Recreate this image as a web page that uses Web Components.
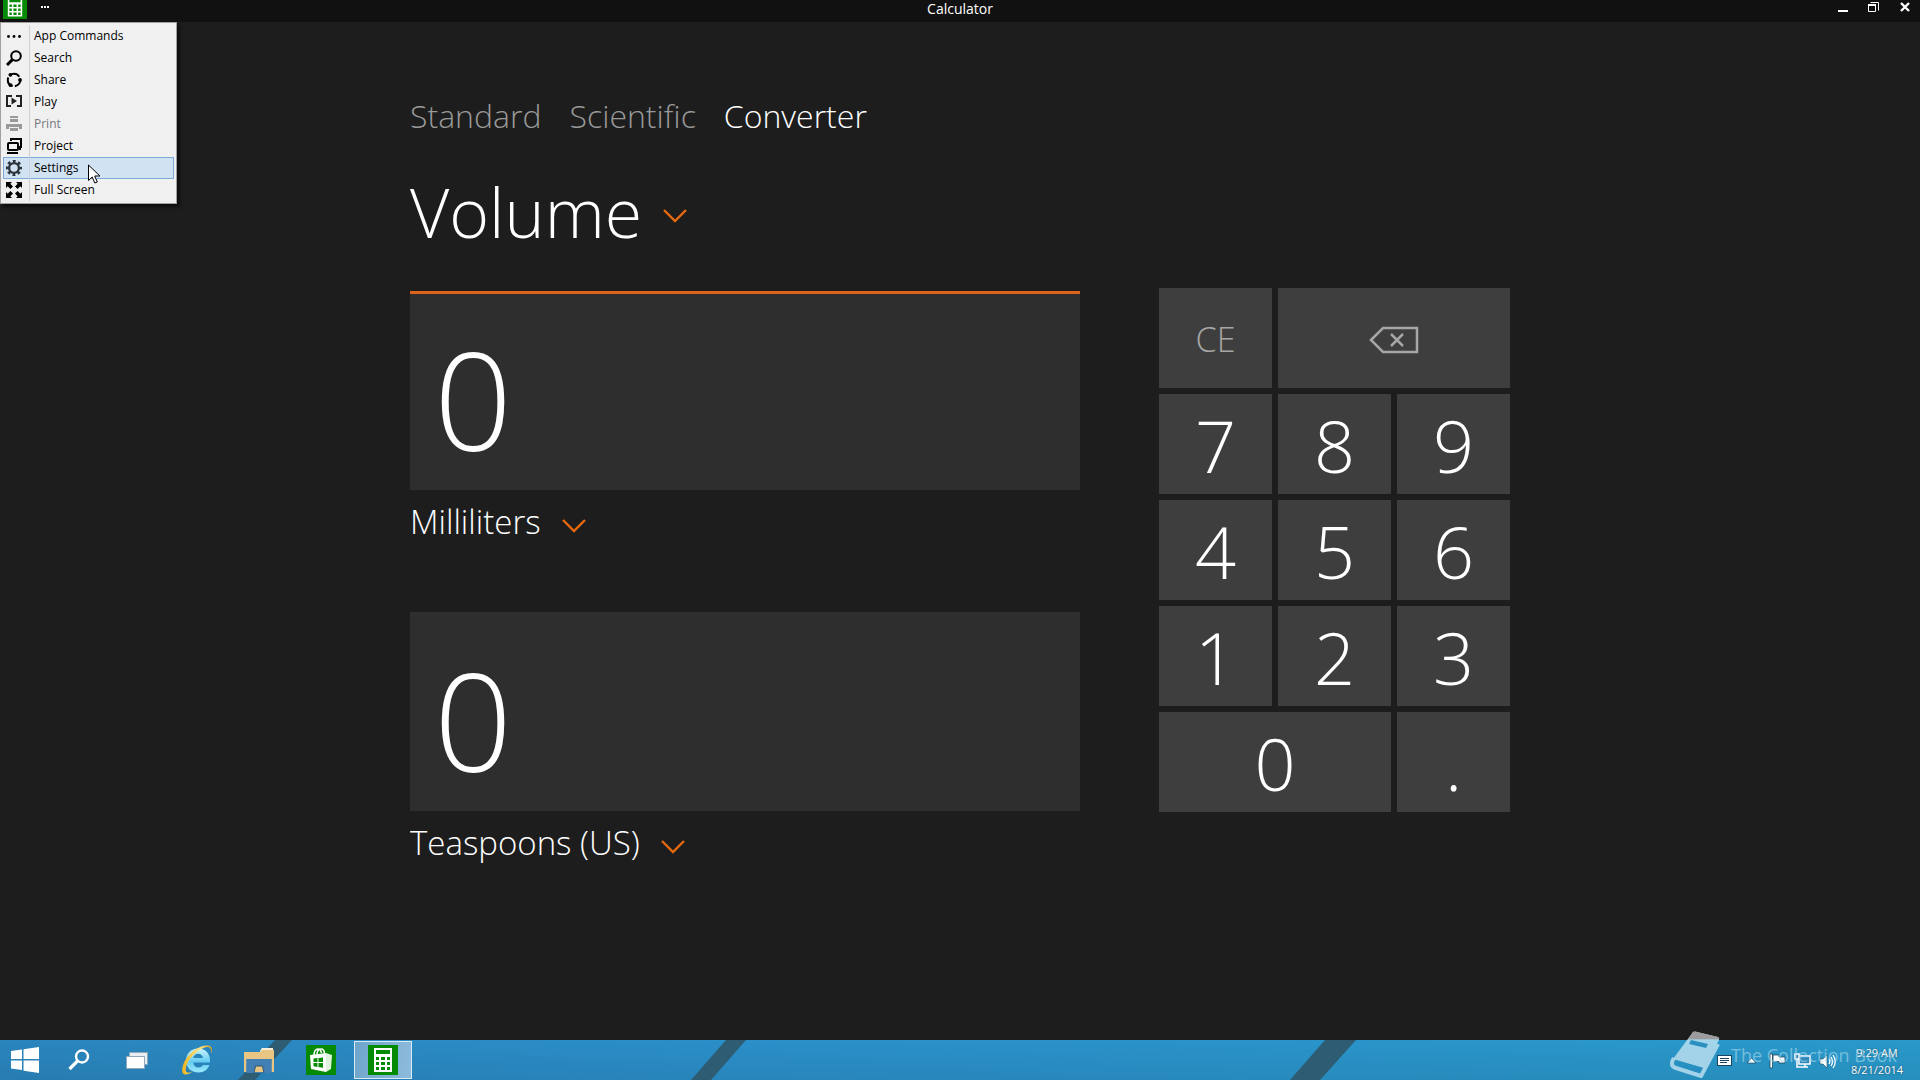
<!DOCTYPE html>
<html lang="en">
<head>
<meta charset="utf-8">
<meta name="viewport" content="width=device-width, initial-scale=1">
<title>Calculator</title>
<style>
  body {
    margin: 0;
    background: #1d1d1d;
    color: #fff;
    font-family: "Open Sans", "Noto Sans", sans-serif;
  }
</style>
</head>
<body>
<calculator-app></calculator-app>

<script>
const calcIcon = `
  <svg viewBox="0 0 30 30" aria-hidden="true">
    <rect width="30" height="30" fill="#058a05"/>
    <path fill="#fff" fill-rule="evenodd" d="M6 3h18v24H6zM8 5v4h14V5zM8 12v3h3v-3zM13 12v3h4v-3zM19 12v3h3v-3zM8 17v3h3v-3zM13 17v3h4v-3zM19 17v3h3v-3zM8 22v3h3v-3zM13 22v3h4v-3zM19 22v3h3v-3z"/>
  </svg>`;

const menuIcons = {
  commands: '<circle cx="2.5" cy="8.5" r="1.4"/><circle cx="8" cy="8.5" r="1.4"/><circle cx="13.5" cy="8.5" r="1.4"/>',
  search: '<g fill="none" stroke="#000"><circle cx="10" cy="6" r="4.8" stroke-width="2"/><path d="M6.4 9.6 1 15" stroke-width="3"/></g>',
  share: '<circle cx="8" cy="8" r="6.2" fill="none" stroke="#000" stroke-width="2" stroke-dasharray="10.6 2.38" stroke-dashoffset="2"/><circle cx="4.4" cy="2.8" r="1.9"/><circle cx="14" cy="8" r="1.9"/><circle cx="4.6" cy="13.2" r="1.9"/>',
  play: '<path fill="none" stroke="#222" stroke-width="2" d="M6 2H1v10h4M10 2h5v10h-4"/><path fill="#222" d="M5.5 3.500 11 7l-5.500 3.500z"/>',
  print: '<path fill="#999" d="M4 0h8v2H4zM4 3h8v3H4zM0 8h16v5h-3v-2H3v2H0zM4 12h8v3H4z"/>',
  project: '<g fill="none" stroke="#000" stroke-width="2"><path d="M5 3V1h10v8h-2"/><rect x="2" y="5" width="10" height="7" rx="1"/><path d="M1 15h11M14 12v-2"/></g>',
  settings: '<g fill="none" stroke="#2b343c"><circle cx="8" cy="8" r="4.9" stroke-width="2.4"/><circle cx="8" cy="8" r="6.8" stroke-width="2.6" stroke-dasharray="2.8 2.54" stroke-dashoffset="1.4"/></g>',
  full: '<path d="M0 0h6L4.300 1.700 7 4.400 4.400 7 1.700 4.300 0 6zM16 0h-6l1.700 1.700L9 4.400 11.600 7l2.700-2.700L16 6zM0 16h6l-1.700-1.700L7 11.600 4.400 9l-2.700 2.700L0 10zM16 16h-6l1.700-1.700L9 11.600 11.600 9l2.700 2.700L16 10z"/>'
};

const taskIcons = {
  start: '<svg width="28" height="26" viewBox="0 0 28 26"><path fill="#fff" d="M0 4l11-1.600V12H0zM12.500 2.200 28 0v12H12.500zM0 13.500h11V23L0 21.500zM12.500 13.500H28V26l-15.500-2.300z"/></svg>',
  search: '<svg width="22" height="22" viewBox="0 0 22 22"><g fill="none" stroke="#fff"><circle cx="14" cy="7.500" r="6" stroke-width="2.400"/><path d="M9.500 12 1.500 20" stroke-width="3.200"/></g></svg>',
  views: '<svg width="22" height="17" viewBox="0 0 22 17"><path fill="#e9eef2" stroke="#8fa9ba" d="M3.500.5h18v12h-18z"/><path fill="#fff" stroke="#8fa9ba" d="M.5 4.500h18v12H.5z"/></svg>',
  ie: `<svg width="32" height="32" viewBox="0 0 32 32">
    <defs><linearGradient id="b" x2="0" y2="1"><stop offset="0" stop-color="#c9f3fd"/><stop offset=".55" stop-color="#64cdf2"/><stop offset="1" stop-color="#9be8fb"/></linearGradient>
    <linearGradient id="y" x2="1" y2="0"><stop offset="0" stop-color="#f0b41c"/><stop offset=".6" stop-color="#fbe38a"/><stop offset="1" stop-color="#e2a50c"/></linearGradient></defs>
    <path fill="url(#b)" fill-rule="evenodd" d="M17 4.500c-7 0-12 5-12 12s5 12 12.500 12c5.500 0 9.500-3 11-7.500h-6.500c-.8 1.500-2.300 2.500-4.500 2.500-3 0-5-2-5.200-5h16.700C29.500 10 25 4.500 17 4.500zm-4.700 9.500c.4-2.500 2.200-4.300 4.800-4.300s4.500 1.800 4.800 4.300z"/>
    <path fill="url(#y)" d="M30.500 8.500c.8-3.500.2-5.800-2-6.500C22-.2 9.500 6.500 3.800 17 .3 23.500.2 30 4 30.500c2.300.3 5-1 7.500-3-3.300 1.600-6.300 1.700-6.700-1C4 21 9.500 12.500 16.500 7.300c5.500-4 11-5.500 12.700-3.300.8 1 1 2.500.6 4.500z"/>
  </svg>`,
  files: '<svg width="30" height="26" viewBox="0 0 30 26"><path fill="#f8efd8" d="M16 4l2-3h11v5H16z"/><path fill="#e9c583" d="M0 5h16l2-2h12v22h-2.500V12h-25v13H0z"/><path fill="#417fb5" d="M2.500 12h25v14h-25z"/><path fill="#e9c583" d="M10 25l1.500-6h7l1.500 6z"/><path fill="none" stroke="#31546d" d="M10 26l1.500-7h7l1.500 7"/></svg>',
  store: '<svg width="30" height="30" viewBox="0 0 30 30"><path fill="#058a05" d="M0 0h30v30H0z"/><path fill="none" stroke="#fff" stroke-width="1.500" d="M8 11c0-5 2-7 4-7s3 1.500 3.500 4M11 10c0-4 2-6 4-6s3.500 2 3.500 5"/><path fill="#fff" d="M4 10l16-2v19L5 24z"/><path fill="#dff3df" d="M20 8l6 2-1 14-5 3z"/><path fill="#058a05" d="M7.500 13.500l4-.5v4h-4zM12.500 13l4.500-.6V17h-4.500zM7.500 18h4v4l-4-.7zM12.500 18H17v4.800l-4.500-.7z"/></svg>',
  calc: calcIcon.replace('<svg', '<svg width="30" height="30"')
};

const trayIcons = {
  'Touch keyboard': '<rect x="2.500" y="3.500" width="14" height="10" fill="#fff" stroke="#1b455e"/><path stroke="#1b455e" d="M5 6.500h9M5 8.500h9M5 10.500h7"/>',
  'Show hidden icons': '<path fill="#fff" stroke="#1b455e" stroke-width=".7" d="M6 11l4.500-5 4.500 5z"/>',
  'Action center': '<path fill="#fff" stroke="#1b455e" stroke-width=".8" d="M3 2h2.500v14H3zM6 3h6v2h6v6h-6V9.500H6z"/>',
  'Network': '<path fill="#2d88b8" stroke="#fff" stroke-width="1.500" d="M6 4h11v8H6zM9 15h6M12 12v3M2 2h4v5H2zM4 7v8h5"/>',
  'Volume': '<path fill="#fff" stroke="#1b455e" stroke-width=".6" d="M1 7h3l4-4v13l-4-4H1z"/><path fill="none" stroke="#fff" stroke-width="1.300" d="M10 7q1.500 2.500 0 5M12 5q3 4.500 0 9M14 3q4.500 6.500 0 13"/>'
};

class BaseElement extends HTMLElement {
  constructor() {
    super();
    this.attachShadow({ mode: 'open' });
  }

  connectedCallback() {
    this.shadowRoot.innerHTML = `
      <style>
        * { box-sizing: border-box; }
        button, select { margin: 0; padding: 0; border: 0; background: none; color: inherit; font: inherit; }
        svg { display: block; flex: none; }
      </style>
      ${this.render()}`;
  }
}

class TitleBar extends BaseElement {
  render() {
    return `
      <style>
        :host {
          display: grid;
          grid-template-columns: 1fr auto 1fr;
          height: 22px;
          overflow: hidden;
          background: #111;
          font-size: 14px;
          line-height: 17px;
        }
        div { display: flex; align-items: start; }
        h1 { margin: 0; font: inherit; }
        .app { padding-left: 3px; gap: 12px; }
        .app button:first-child svg { width: 24px; height: 24px; margin-top: -5px; }
        .window { justify-content: end; gap: 15px; padding-right: 7px; }
      </style>
      <div class="app">
        <button aria-label="System menu">${calcIcon}</button>
        <button aria-label="App commands"><svg width="14" height="14"><path fill="#fff" d="M2 6h2v2H2zM5 6h2v2H5zM8 6h2v2H8z"/></svg></button>
      </div>
      <h1>Calculator</h1>
      <div class="window">
        <button aria-label="Minimize"><svg width="16" height="14"><path fill="#fff" d="M3 10h10v2H3z"/></svg></button>
        <button aria-label="Restore"><svg width="16" height="14"><path fill="none" stroke="#fff" d="M4.500 2.500h8v8M2.500 5.500h7v6h-7z"/><path fill="#fff" d="M2 4h8v2H2z"/></svg></button>
        <button aria-label="Close"><svg width="16" height="14"><path stroke="#fff" stroke-width="2.400" d="M4 3l8 8M12 3l-8 8"/></svg></button>
      </div>`;
  }
}

class MenuItem extends BaseElement {
  render() {
    const icon = menuIcons[this.getAttribute('icon')];
    return `
      <style>
        :host { display: block; }
        button {
          display: flex;
          align-items: center;
          width: 100%;
          height: 22px;
          border: 1px solid transparent;
          color: #000;
          text-align: left;
        }
        svg { margin: 0 7px 0 2px; }
        span { flex: 1; border-left: 1px solid #ccd0d4; padding-left: 4px; line-height: 22px; }
        button:disabled { color: #77777c; }
        :host([active]) button { background: #d1e2f2; border-color: #7fa9d8; }
      </style>
      <button role="menuitem" ${this.hasAttribute('disabled') ? 'disabled' : ''}>
        <svg width="16" height="16" viewBox="0 0 16 16" aria-hidden="true">${icon}</svg>
        <span><slot></slot></span>
      </button>`;
  }
}

class CommandMenu extends BaseElement {
  render() {
    return `
      <style>
        :host {
          display: block;
          width: 177px;
          box-sizing: border-box;
          padding: 2px;
          border: 1px solid #a0a0a0;
          background: #f0f0f0;
          box-shadow: 3px 3px 3px #0008;
          font-size: 12px;
        }
        .cursor { position: absolute; left: 87px; top: 141px; }
      </style>
      <div role="menu">
        <menu-item icon="commands">App Commands</menu-item>
        <menu-item icon="search">Search</menu-item>
        <menu-item icon="share">Share</menu-item>
        <menu-item icon="play">Play</menu-item>
        <menu-item icon="print" disabled>Print</menu-item>
        <menu-item icon="project">Project</menu-item>
        <menu-item icon="settings" active>Settings</menu-item>
        <menu-item icon="full">Full Screen</menu-item>
      </div>
      <svg class="cursor" width="13" height="20" viewBox="0 0 13 20"><path fill="#fff" stroke="#000" d="M.5 1v15.500l3.700-3.500 2.600 6 2.500-1-2.600-6h5.200z"/></svg>`;
  }
}

class ModeTabs extends BaseElement {
  render() {
    return `
      <style>
        :host { display: block; font-size: 32px; line-height: 48px; font-weight: 300; }
        nav { display: flex; gap: 28px; }
        a { color: #999; text-decoration: none; }
        a[aria-current] { color: #fff; }
      </style>
      <nav aria-label="Mode">
        <a href="#standard">Standard</a>
        <a href="#scientific">Scientific</a>
        <a href="#converter" aria-current="page">Converter</a>
      </nav>`;
  }
}

class UnitPicker extends BaseElement {
  render() {
    return `
      <style>
        :host { display: block; font-size: 33px; line-height: 48px; font-weight: 300; }
        :host([large]) { font-size: 68px; line-height: 96px; }
        label { display: inline-flex; align-items: center; gap: 20px; }
        select { appearance: none; field-sizing: content; outline: none; }
        option { background: #2e2e2e; font-size: 20px; }
      </style>
      <label>
        <select aria-label="${this.getAttribute('label')}">
          <option>${this.getAttribute('value')}</option>
        </select>
        <svg width="26" height="24" viewBox="0 0 26 24" aria-hidden="true"><path fill="none" stroke="#e8690f" stroke-width="2.400" d="M2 10l11 11 11-11"/></svg>
      </label>`;
  }
}

class ValueDisplay extends BaseElement {
  render() {
    return `
      <style>
        :host { display: block; }
        output {
          display: block;
          height: 199px;
          padding: 24px 24px 0;
          border-top: 3px solid #2e2e2e;
          background: #2e2e2e;
          font-size: 137px;
          line-height: 160px;
          font-weight: 300;
        }
        :host([active]) output { border-color: #d9641a; }
      </style>
      <output><slot></slot></output>`;
  }
}

class KeyPad extends BaseElement {
  render() {
    const digits = (list) => list.map((key) => `<button>${key}</button>`).join('');
    return `
      <style>
        :host {
          display: grid;
          grid-template-columns: repeat(3, 1fr);
          grid-auto-rows: 100px;
          gap: 6px;
          align-content: start;
          font-size: 72px;
          font-weight: 300;
        }
        button {
          display: flex;
          align-items: center;
          justify-content: center;
          padding-top: 3px;
          background: #3e3e3e;
          line-height: 97px;
        }
        .wide { grid-column: span 2; }
        .dim { color: #a6a6a6; font-size: 34px; }
      </style>
      <button class="dim">CE</button>
      <button class="dim wide" aria-label="Backspace">
        <svg width="50" height="28" viewBox="0 0 50 28" fill="none" stroke="#a6a6a6" stroke-width="2.500"><path d="M2 14 14 2h34v24H14zM22 8l12 12M34 8 22 20"/></svg>
      </button>
      ${digits([7, 8, 9, 4, 5, 6, 1, 2, 3])}
      <button class="wide">0</button>
      <button>.</button>`;
  }
}

class TaskButton extends BaseElement {
  render() {
    return `
      <style>
        :host { display: block; width: 62px; padding: 1px 2px; box-sizing: border-box; }
        :host([size="small"]) { width: 58px; }
        :host([size="start"]) { width: 50px; }
        button { display: flex; align-items: center; justify-content: center; width: 100%; height: 38px; }
        :host([active]) button { border: 1px solid #d8ecf8; background: linear-gradient(100deg, #6fa5cb, #8dbbdc); }
      </style>
      <button aria-label="${this.getAttribute('label')}">${taskIcons[this.getAttribute('icon')]}</button>`;
  }
}

class SystemTray extends BaseElement {
  render() {
    const icons = Object.entries(trayIcons)
      .map(([name, shape]) => `<button aria-label="${name}"><svg width="19" height="18" viewBox="0 0 19 18">${shape}</svg></button>`)
      .join('');
    return `
      <style>
        :host { display: flex; align-items: center; padding-right: 7px; font-size: 11px; line-height: 17px; }
        button { display: flex; justify-content: center; width: 26px; padding-top: 2px; }
        .clock { display: block; width: 72px; text-align: center; text-shadow: 0 0 2px #1b455e; }
        time { display: block; }
      </style>
      ${icons}
      <button class="clock"><time>9:29 AM</time><time>8/21/2014</time></button>`;
  }
}

class TaskBar extends BaseElement {
  render() {
    return `
      <style>
        :host {
          display: flex;
          justify-content: space-between;
          position: relative;
          height: 40px;
          background: linear-gradient(#0000, #0001), linear-gradient(90deg, #2a85bd, #2b8fc9 40%, #2999ca);
        }
        .stripes { position: absolute; inset: 0; width: 100%; height: 100%; }
        nav, system-tray { position: relative; }
        nav { display: flex; }
      </style>
      <svg class="stripes" viewBox="0 0 1920 40" preserveAspectRatio="none" aria-hidden="true">
        <path fill="#2d5c73" d="M275 0h17l-37 40h-17zM726 0h20l-35 40h-20zM1325 0h31l-36 40h-30z"/>
      </svg>
      <nav aria-label="Taskbar">
        <task-button icon="start" label="Start" size="start"></task-button>
        <task-button icon="search" label="Search" size="small"></task-button>
        <task-button icon="views" label="Task View" size="small"></task-button>
        <task-button icon="ie" label="Internet Explorer"></task-button>
        <task-button icon="files" label="File Explorer"></task-button>
        <task-button icon="store" label="Store"></task-button>
        <task-button icon="calc" label="Calculator" active></task-button>
      </nav>
      <system-tray></system-tray>`;
  }
}

class BookMark extends BaseElement {
  render() {
    return `
      <style>
        :host { display: flex; align-items: center; gap: 11px; font-size: 18px; line-height: 24px; pointer-events: none; }
        svg { opacity: .85; }
        span { color: #a5d8ee; opacity: .6; }
      </style>
      <svg width="50" height="47" viewBox="0 0 50 47" aria-hidden="true">
        <path fill="#b8dff0" d="M23 1q2-1 4 0l21 5q2 1 1 3L34 37 3 28z"/>
        <path fill="#b3b3b3" d="M23 1q2-1 4 0l21 5q1 1 1 2H18.500z"/>
        <path fill="none" stroke="#b8dff0" stroke-width="4" d="M4 27q-5 8 2 10l25 8 17-32"/>
        <path fill="#2c8fbe" d="M21 9l17 4-2 4-17-4z"/>
      </svg>
      <span>The Collection Book</span>`;
  }
}

class CalculatorApp extends BaseElement {
  render() {
    return `
      <style>
        :host { display: flex; flex-direction: column; position: relative; min-height: 100vh; }
        command-menu { position: absolute; left: 0; top: 22px; }
        book-mark { position: absolute; right: 23px; bottom: 2px; }
        main { flex: 1; width: 100%; max-width: 1100px; margin: 0 auto; padding-top: 70px; }
        main > unit-picker { margin: 24px 0 28px; }
        .converter { display: grid; grid-template-columns: minmax(0, 1fr) 351px; gap: 79px; }
        .values { padding-top: 3px; }
        .values unit-picker { margin: 8px 0 66px; }
      </style>
      <title-bar></title-bar>
      <main>
        <mode-tabs></mode-tabs>
        <unit-picker large label="Category" value="Volume"></unit-picker>
        <div class="converter">
          <div class="values">
            <value-display active>0</value-display>
            <unit-picker label="From unit" value="Milliliters"></unit-picker>
            <value-display>0</value-display>
            <unit-picker label="To unit" value="Teaspoons (US)"></unit-picker>
          </div>
          <key-pad></key-pad>
        </div>
      </main>
      <task-bar></task-bar>
      <command-menu></command-menu>
      <book-mark></book-mark>`;
  }
}

customElements.define('title-bar', TitleBar);
customElements.define('menu-item', MenuItem);
customElements.define('command-menu', CommandMenu);
customElements.define('mode-tabs', ModeTabs);
customElements.define('unit-picker', UnitPicker);
customElements.define('value-display', ValueDisplay);
customElements.define('key-pad', KeyPad);
customElements.define('task-button', TaskButton);
customElements.define('system-tray', SystemTray);
customElements.define('task-bar', TaskBar);
customElements.define('book-mark', BookMark);
customElements.define('calculator-app', CalculatorApp);
</script>
</body>
</html>
